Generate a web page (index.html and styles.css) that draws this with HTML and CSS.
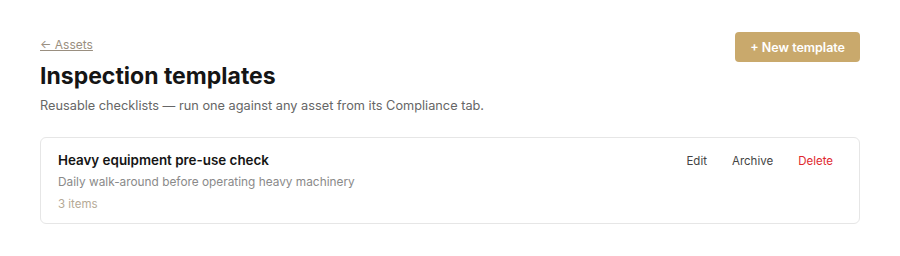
FILE: index.html
```html
<!DOCTYPE html>
<html lang="en">
<head>
  <meta charset="UTF-8">
  <meta name="viewport" content="width=device-width, initial-scale=1.0">
  <title>Inspection templates</title>
  <link rel="stylesheet" href="styles.css">
</head>
<body>
  <div class="page">
    <div class="page-head">
      <div>
        <a class="back-link" href="#">&larr; Assets</a>
        <h1>Inspection templates</h1>
        <p class="subtitle">Reusable checklists — run one against any asset from its Compliance tab.</p>
      </div>
      <button class="primary-btn">+ New template</button>
    </div>

    <div class="template-card">
      <div class="template-info">
        <h2>Heavy equipment pre-use check</h2>
        <p class="template-desc">Daily walk-around before operating heavy machinery</p>
        <p class="template-count">3 items</p>
      </div>
      <div class="template-actions">
        <button class="link-btn">Edit</button>
        <button class="link-btn">Archive</button>
        <button class="link-btn danger">Delete</button>
      </div>
    </div>
  </div>
</body>
</html>
```

FILE: styles.css
```css
body {
  margin: 0;
  font-family: Inter, "Noto Sans", sans-serif;
  background-color: #fff;
  color: #151515;
}
.page {
  padding: 33px 40px 24px;
}
.page-head {
  display: flex;
  justify-content: space-between;
  align-items: flex-start;
  margin-bottom: 22px;
}
.back-link {
  font-size: 12px;
  color: #9a8f80;
  text-decoration: underline;
  line-height: 16px;
  display: inline-block;
}
h1 {
  margin: 8px 0 0;
  font-size: 23px;
  font-weight: 700;
  line-height: 30px;
}
.subtitle {
  margin: 6px 0 0;
  font-size: 12.75px;
  color: #666;
  line-height: 18px;
}
.primary-btn {
  margin-top: -1px;
  height: 30px;
  padding: 0 15px;
  background-color: #c9a96c;
  color: #fff;
  border: none;
  border-radius: 4px;
  font-family: inherit;
  font-size: 12.5px;
  font-weight: 600;
  cursor: pointer;
}
.template-card {
  display: flex;
  justify-content: space-between;
  align-items: flex-start;
  border: 1px solid #e6e6e6;
  border-radius: 6px;
  padding: 13px 18px 11px 17px;
}
.template-info h2 {
  margin: 0;
  font-size: 13.4px;
  font-weight: 600;
  line-height: 18px;
  color: #151515;
}
.template-desc {
  margin: 5px 0 0;
  font-size: 11.85px;
  color: #8a8a8a;
  line-height: 16px;
}
.template-count {
  margin: 6px 0 0;
  font-size: 11.5px;
  color: #b5a996;
  line-height: 16px;
}
.template-actions {
  display: flex;
  gap: 9px;
  margin-top: 1px;
}
.link-btn {
  background: none;
  border: none;
  padding: 2px 8px;
  font-family: inherit;
  font-size: 11.5px;
  color: #444;
  cursor: pointer;
}
.link-btn.danger {
  color: #e0282e;
}
```
